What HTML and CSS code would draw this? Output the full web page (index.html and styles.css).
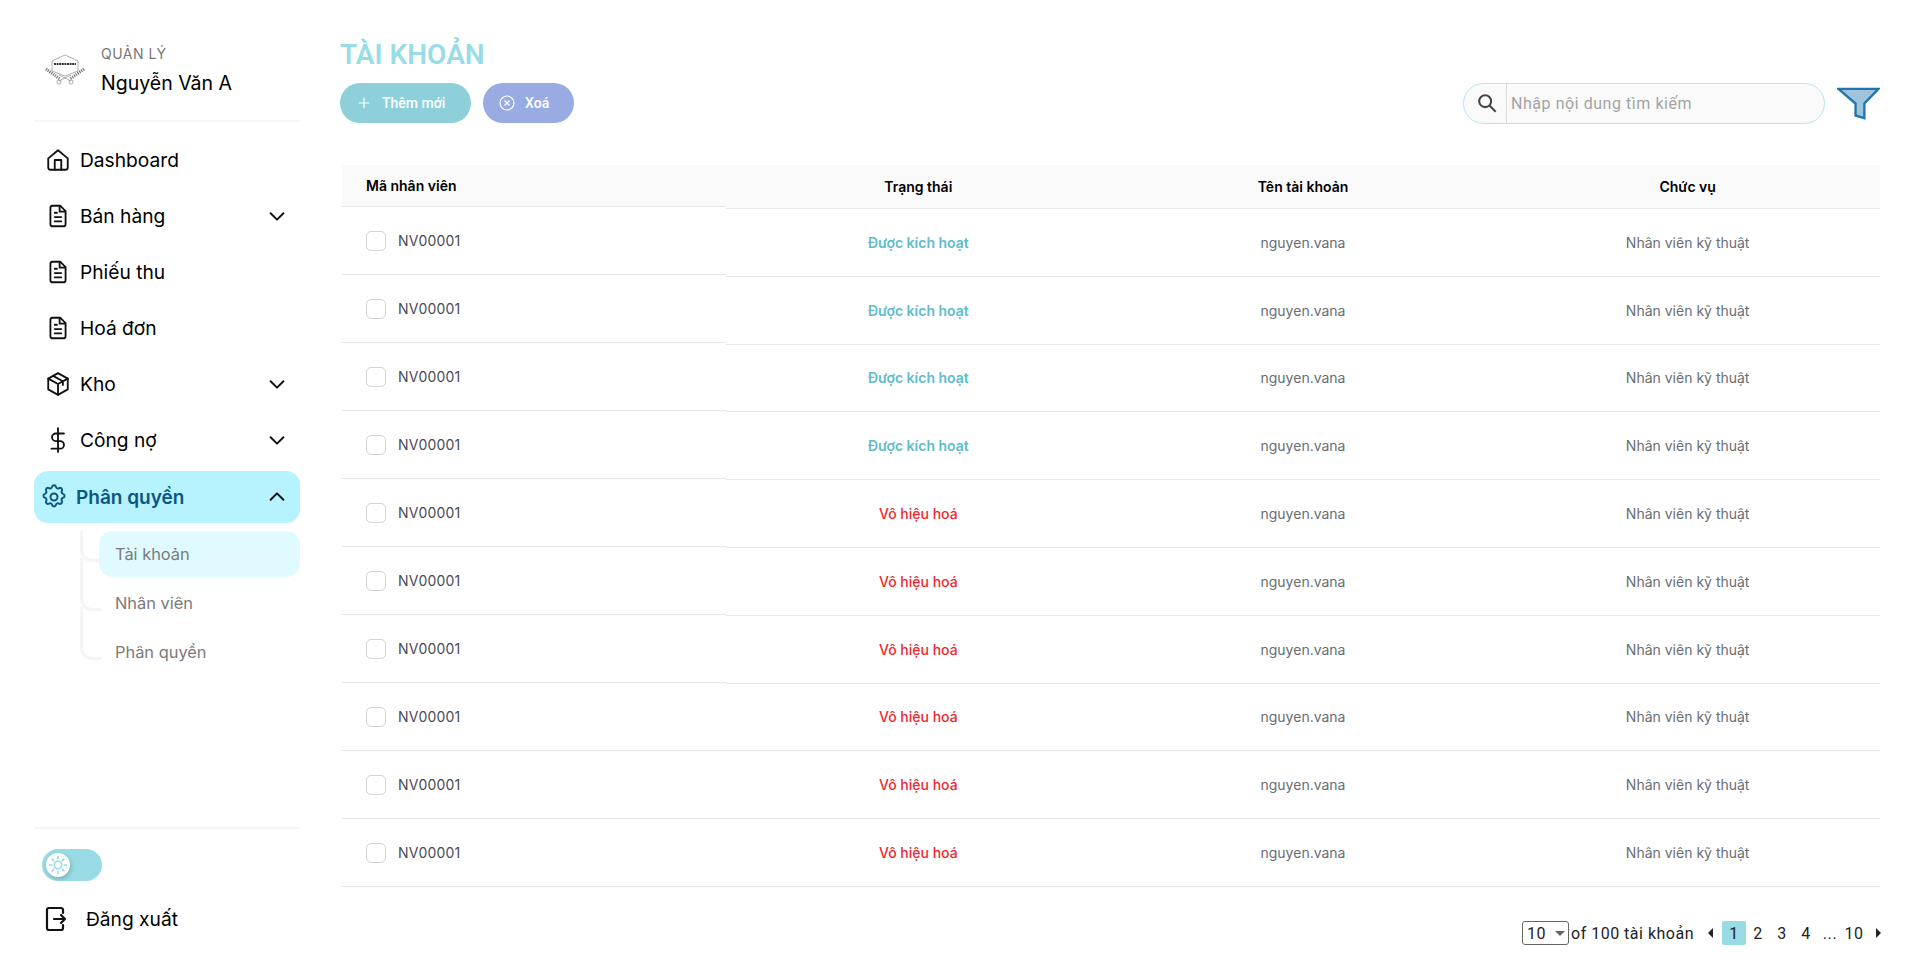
FILE: index.html
```html
<!DOCTYPE html>
<html lang="vi">
<head>
    <meta charset="UTF-8">
    <title>Tài khoản</title>
    <link rel="stylesheet" href="styles.css">
</head>
<body>

<aside class="sidebar">
    <div class="user">
        <svg class="logo" viewBox="0 0 40 32" fill="none" stroke="#777" stroke-width="0.6">
            <path d="M20 1 L33 7 V17 L20 22 L7 17 V7 Z"/>
            <line x1="9" y1="10" x2="31" y2="10" stroke="#333" stroke-width="2" stroke-dasharray="2 .6"/>
            <path d="M1 15 L15 25 M39 15 L25 25" stroke-width="3" stroke-dasharray="1.2 1"/>
            <path d="M14 27 L26 21 M26 27 L14 21"/>
            <circle cx="14" cy="28" r="2"/>
            <circle cx="26" cy="28" r="2"/>
        </svg>
        <div>
            <div class="user-role">QUẢN LÝ</div>
            <div class="user-name">Nguyễn Văn A</div>
        </div>
    </div>

    <nav class="menu">
        <a class="menu-item">
            <svg class="menu-icon" viewBox="0 0 24 24"><path d="M3 10.5 12 3l9 7.5V19a2 2 0 0 1-2 2H5a2 2 0 0 1-2-2z"/><path d="M9 21v-9h6v9"/></svg>
            Dashboard
        </a>
        <a class="menu-item">
            <svg class="menu-icon" viewBox="0 0 24 24"><path d="M14 2.5H7a2 2 0 0 0-2 2v15a2 2 0 0 0 2 2h10a2 2 0 0 0 2-2V7.5z"/><path d="M13.5 3v5h5M9 9h2M9 13h6M9 17h6"/></svg>
            Bán hàng
            <svg class="chevron" viewBox="0 0 24 24"><path d="m5 9 7 7 7-7"/></svg>
        </a>
        <a class="menu-item">
            <svg class="menu-icon" viewBox="0 0 24 24"><path d="M14 2.5H7a2 2 0 0 0-2 2v15a2 2 0 0 0 2 2h10a2 2 0 0 0 2-2V7.5z"/><path d="M13.5 3v5h5M9 9h2M9 13h6M9 17h6"/></svg>
            Phiếu thu
        </a>
        <a class="menu-item">
            <svg class="menu-icon" viewBox="0 0 24 24"><path d="M14 2.5H7a2 2 0 0 0-2 2v15a2 2 0 0 0 2 2h10a2 2 0 0 0 2-2V7.5z"/><path d="M13.5 3v5h5M9 9h2M9 13h6M9 17h6"/></svg>
            Hoá đơn
        </a>
        <a class="menu-item">
            <svg class="menu-icon" viewBox="0 0 24 24"><path d="M12 2 3 7v10l9 5 9-5V7z"/><path d="m3 7 9 5 9-5M12 12v10M7.5 4.5l9 5v3.5"/></svg>
            Kho
            <svg class="chevron" viewBox="0 0 24 24"><path d="m5 9 7 7 7-7"/></svg>
        </a>
        <a class="menu-item">
            <svg class="menu-icon" viewBox="0 0 24 24"><path d="M12 1v22M17.5 6H10a3.5 3.5 0 0 0 0 7h4a3.5 3.5 0 0 1 0 7H6"/></svg>
            Công nợ
            <svg class="chevron" viewBox="0 0 24 24"><path d="m5 9 7 7 7-7"/></svg>
        </a>
        <a class="menu-item menu-item-active">
            <svg class="menu-icon" viewBox="0 0 24 24"><path d="M10.3 3.3c.4-1.8 3-1.8 3.4 0a1.7 1.7 0 0 0 2.6 1.1c1.5-.9 3.3.8 2.4 2.4a1.7 1.7 0 0 0 1 2.5c1.8.4 1.8 3 0 3.4a1.7 1.7 0 0 0-1 2.6c.9 1.5-.9 3.3-2.4 2.4a1.7 1.7 0 0 0-2.6 1c-.4 1.8-3 1.8-3.4 0a1.7 1.7 0 0 0-2.6-1c-1.5.9-3.3-.9-2.4-2.4a1.7 1.7 0 0 0-1-2.6c-1.8-.4-1.8-3 0-3.4a1.7 1.7 0 0 0 1-2.5c-.9-1.6.9-3.3 2.4-2.4a1.7 1.7 0 0 0 2.6-1.1z"/><circle cx="12" cy="12" r="3"/></svg>
            Phân quyền
            <svg class="chevron" viewBox="0 0 24 24"><path d="m5 15 7-7 7 7"/></svg>
        </a>
        <div class="submenu">
            <a class="submenu-item submenu-item-active">Tài khoản</a>
            <a class="submenu-item">Nhân viên</a>
            <a class="submenu-item">Phân quyền</a>
        </div>
    </nav>

    <div class="sidebar-bottom">
        <div class="toggle">
            <span class="toggle-knob">
                <svg viewBox="0 0 24 24" fill="none" stroke="#98dbe4" stroke-width="2" stroke-linecap="round"><circle cx="12" cy="12" r="4.5"/><path d="M12 2v2.5M12 19.5V22M2 12h2.5M19.5 12H22M5 5l1.7 1.7M17.3 17.3 19 19M5 19l1.7-1.7M17.3 6.7 19 5"/></svg>
            </span>
        </div>
        <a class="logout">
            <svg class="logout-icon" viewBox="0 0 22 26"><path d="M18 7V4a2 2 0 0 0-2-2H4a2 2 0 0 0-2 2v18a2 2 0 0 0 2 2h12a2 2 0 0 0 2-2v-3"/><path d="M9 13h11M16 9l4 4-4 4"/></svg>
            Đăng xuất
        </a>
    </div>
</aside>

<main class="main">
    <h1 class="title">TÀI KHOẢN</h1>

    <div class="toolbar">
        <button class="btn btn-add">
            <svg class="btn-icon" viewBox="0 0 14 14"><path d="M7 1v12M1 7h12"/></svg>
            Thêm mới
        </button>
        <button class="btn btn-delete">
            <svg class="btn-icon btn-icon-x" viewBox="0 0 16 16"><circle cx="8" cy="8" r="7"/><path d="m5.5 5.5 5 5M10.5 5.5l-5 5"/></svg>
            Xoá
        </button>

        <div class="search">
            <span class="search-icon">
                <svg viewBox="0 0 24 24" fill="none" stroke="#444" stroke-width="2.2"><circle cx="10" cy="10" r="6.5"/><path d="m15 15 6.5 6.5"/></svg>
            </span>
            <span class="search-text">Nhập nội dung tìm kiếm</span>
        </div>
        <svg class="filter" viewBox="0 0 44 33"><path d="M1.5 1.5h41L28 16.5V31.5l-9-2.5V16.5z" fill="#9fc3da" stroke="#1f75ad" stroke-width="2.4"/></svg>
    </div>

    <div class="table">
        <div class="col-id">
            <div class="col-id-head">Mã nhân viên</div>
            <div class="id-cell"><span class="checkbox"></span>NV00001</div>
            <div class="id-cell"><span class="checkbox"></span>NV00001</div>
            <div class="id-cell"><span class="checkbox"></span>NV00001</div>
            <div class="id-cell"><span class="checkbox"></span>NV00001</div>
            <div class="id-cell"><span class="checkbox"></span>NV00001</div>
            <div class="id-cell"><span class="checkbox"></span>NV00001</div>
            <div class="id-cell"><span class="checkbox"></span>NV00001</div>
            <div class="id-cell"><span class="checkbox"></span>NV00001</div>
            <div class="id-cell"><span class="checkbox"></span>NV00001</div>
            <div class="id-cell"><span class="checkbox"></span>NV00001</div>
        </div>
        <div class="col-rest">
            <div class="row row-head"><span>Trạng thái</span><span>Tên tài khoản</span><span>Chức vụ</span></div>
            <div class="row"><span class="status-on">Được kích hoạt</span><span>nguyen.vana</span><span>Nhân viên kỹ thuật</span></div>
            <div class="row"><span class="status-on">Được kích hoạt</span><span>nguyen.vana</span><span>Nhân viên kỹ thuật</span></div>
            <div class="row"><span class="status-on">Được kích hoạt</span><span>nguyen.vana</span><span>Nhân viên kỹ thuật</span></div>
            <div class="row"><span class="status-on">Được kích hoạt</span><span>nguyen.vana</span><span>Nhân viên kỹ thuật</span></div>
            <div class="row"><span class="status-off">Vô hiệu hoá</span><span>nguyen.vana</span><span>Nhân viên kỹ thuật</span></div>
            <div class="row"><span class="status-off">Vô hiệu hoá</span><span>nguyen.vana</span><span>Nhân viên kỹ thuật</span></div>
            <div class="row"><span class="status-off">Vô hiệu hoá</span><span>nguyen.vana</span><span>Nhân viên kỹ thuật</span></div>
            <div class="row"><span class="status-off">Vô hiệu hoá</span><span>nguyen.vana</span><span>Nhân viên kỹ thuật</span></div>
            <div class="row"><span class="status-off">Vô hiệu hoá</span><span>nguyen.vana</span><span>Nhân viên kỹ thuật</span></div>
            <div class="row"><span class="status-off">Vô hiệu hoá</span><span>nguyen.vana</span><span>Nhân viên kỹ thuật</span></div>
        </div>
    </div>

    <div class="pagination">
        <span class="page-size">10<i class="caret-down"></i></span>
        <span class="page-total">of 100 tài khoản</span>
        <i class="arrow-left"></i>
        <a class="page page-active">1</a>
        <a class="page">2</a>
        <a class="page">3</a>
        <a class="page">4</a>
        <a class="page">...</a>
        <a class="page">10</a>
        <i class="arrow-right"></i>
    </div>
</main>

</body>
</html>
```

FILE: styles.css
```css
* {
    margin: 0;
    padding: 0;
    box-sizing: border-box;
}

body {
    width: 100%;
    height: 100vh;
    display: flex;
    background: #fff;
    font-family: 'Inter', sans-serif;
    color: #000;
    overflow: hidden;
}

/* Sidebar */
.sidebar {
    width: 266px;
    margin-left: 34px;
    flex-shrink: 0;
    display: flex;
    flex-direction: column;
}

.user {
    height: 122px;
    padding: 44px 0 0 11px;
    display: flex;
    gap: 16px;
    border-bottom: 2px solid #f5f5f5;
}

.logo {
    width: 40px;
    height: 32px;
    margin-top: 10px;
}

.user-role {
    font-size: 14px;
    line-height: 20px;
    color: #777;
    letter-spacing: 0.5px;
}

.user-name {
    font-size: 19.5px;
    line-height: 24px;
    margin-top: 7px;
}

.menu {
    margin-top: 10px;
}

.menu-item {
    height: 56px;
    padding: 0 12px 0 11px;
    display: flex;
    align-items: center;
    gap: 9px;
    font-size: 19.2px;
}

.menu-icon {
    width: 26px;
    height: 26px;
    fill: none;
    stroke: #111;
    stroke-width: 1.7;
    stroke-linejoin: round;
    stroke-linecap: round;
}

.chevron {
    width: 22px;
    height: 22px;
    margin-left: auto;
    fill: none;
    stroke: #111;
    stroke-width: 2.1;
    stroke-linecap: round;
    stroke-linejoin: round;
}

.menu-item-active {
    height: 52px;
    margin-top: 3px;
    padding-left: 6px;
    gap: 8px;
    background: #b6f3fe;
    border-radius: 14px;
    font-size: 19px;
    font-weight: 600;
    color: #0c5680;
}

.menu-item-active .menu-icon {
    width: 28px;
    height: 28px;
    stroke: #0c5680;
}

.submenu {
    margin-top: 8px;
    margin-left: 65px;
    display: flex;
    flex-direction: column;
    gap: 3px;
}

.submenu-item {
    height: 46px;
    padding-left: 16px;
    display: flex;
    align-items: center;
    position: relative;
    font-size: 16.4px;
    color: #7a7a7a;
    border-radius: 14px;
}

.submenu-item::before {
    content: '';
    position: absolute;
    left: -19px;
    top: -22px;
    width: 19px;
    height: 50px;
    border-left: 3px solid #f5f5f5;
    border-bottom: 3px solid #f5f5f5;
    border-bottom-left-radius: 12px;
}

.submenu-item-active::before {
    top: 0;
    height: 28px;
}

.submenu-item-active {
    background: #e0fbff;
}

.sidebar-bottom {
    margin-top: auto;
    height: 148px;
    border-top: 2px solid #f5f5f5;
    padding-top: 20px;
}

.toggle {
    width: 60px;
    height: 32px;
    margin-left: 8px;
    padding: 4px;
    background: #98dbe4;
    border-radius: 16px;
}

.toggle-knob {
    width: 24px;
    height: 24px;
    display: flex;
    align-items: center;
    justify-content: center;
    background: #fff;
    border-radius: 50%;
    box-shadow: 1px 2px 4px rgba(0, 0, 0, 0.2);
}

.toggle-knob svg {
    width: 20px;
    height: 20px;
}

.logout {
    margin-top: 25px;
    padding-left: 11px;
    display: flex;
    align-items: center;
    gap: 19px;
    font-size: 19.2px;
}

.logout-icon {
    width: 22px;
    height: 26px;
    fill: none;
    stroke: #111;
    stroke-width: 2.2;
    stroke-linecap: round;
    stroke-linejoin: round;
}

/* Main */
.main {
    flex: 1;
    margin-left: 40px;
    padding-right: 40px;
}

.title {
    margin-top: 38px;
    font-family: 'Roboto', sans-serif;
    font-size: 28px;
    line-height: 34px;
    font-weight: 600;
    color: #98dde6;
}

.toolbar {
    margin-top: 11px;
    display: flex;
    align-items: center;
    gap: 12px;
    height: 40px;
}

.btn {
    height: 40px;
    display: flex;
    align-items: center;
    border: none;
    border-radius: 20px;
    color: #fff;
    font-family: 'Roboto', sans-serif;
    font-size: 14px;
    font-weight: 500;
}

.btn-add {
    width: 131px;
    padding-left: 18px;
    gap: 12px;
    background: #8dd0da;
}

.btn-delete {
    width: 91px;
    padding-left: 16px;
    gap: 10px;
    background: #98ace3;
}

.btn-icon {
    width: 12px;
    height: 12px;
    fill: none;
    stroke: #fff;
    stroke-width: 1.4;
}

.btn-icon-x {
    width: 16px;
    height: 16px;
    stroke-width: 1.2;
}

.search {
    width: 362px;
    height: 41px;
    margin-left: auto;
    display: flex;
    align-items: center;
    background: #fafafa;
    border: 1.5px solid #b5e5ec;
    border-radius: 21px;
}

.search-icon {
    width: 43px;
    height: 100%;
    padding-left: 3px;
    flex-shrink: 0;
    display: flex;
    align-items: center;
    justify-content: center;
    border-right: 1px solid #ddd;
}

.search-icon svg {
    width: 22px;
    height: 22px;
}

.search-text {
    margin-left: 4px;
    font-family: 'Roboto', sans-serif;
    font-size: 16px;
    letter-spacing: 0.55px;
    color: #a3a3a3;
}

.filter {
    width: 43px;
    height: 33px;
    flex-shrink: 0;
}

/* Table */
.table {
    margin-top: 42px;
    margin-left: 2px;
    display: flex;
}

.col-id {
    width: 384px;
    flex-shrink: 0;
}

.col-rest {
    flex: 1;
}

.col-id-head {
    height: 42px;
    padding-left: 24px;
    display: flex;
    align-items: center;
    background: #fafafa;
    border-bottom: 1px solid #e8e8e8;
    font-size: 14px;
    font-weight: 600;
}

.id-cell {
    height: 68px;
    padding-left: 24px;
    display: flex;
    align-items: center;
    gap: 12px;
    border-bottom: 1px solid #e8e8e8;
    font-size: 14px;
    letter-spacing: 0.2px;
    color: #4b4b55;
}

.checkbox {
    width: 20px;
    height: 20px;
    background: #fff;
    border: 1px solid #d4d4d4;
    border-radius: 5px;
}

.row {
    height: 67.8px;
    display: grid;
    grid-template-columns: repeat(3, 1fr);
    align-items: center;
    text-align: center;
    border-bottom: 1px solid #e8e8e8;
    font-size: 14px;
    color: #696d75;
}

.row-head {
    height: 44px;
    background: #fafafa;
    font-weight: 600;
    color: #000;
}

.status-on {
    font-weight: 600;
    color: #5fbccb;
}

.status-off {
    font-weight: 500;
    color: #f0272d;
}

/* Pagination */
.pagination {
    margin-top: 34px;
    display: flex;
    align-items: center;
    justify-content: flex-end;
    font-family: 'Roboto', sans-serif;
    font-size: 16px;
    letter-spacing: 0.6px;
    color: #222;
}

.page-size {
    width: 47px;
    height: 24px;
    padding-left: 4px;
    display: flex;
    align-items: center;
    border: 1px solid #666;
    border-radius: 3px;
}

.caret-down {
    margin-left: 9px;
    border-left: 5px solid transparent;
    border-right: 5px solid transparent;
    border-top: 5px solid #666;
}

.page-total {
    margin-left: 2px;
    margin-right: 14px;
    letter-spacing: 0.5px;
}

.arrow-left {
    margin-right: 9px;
    border-top: 5px solid transparent;
    border-bottom: 5px solid transparent;
    border-right: 5px solid #222;
}

.arrow-right {
    margin-left: 10px;
    margin-right: -1px;
    border-top: 5px solid transparent;
    border-bottom: 5px solid transparent;
    border-left: 5px solid #222;
}

.page {
    width: 24px;
    height: 24px;
    display: flex;
    align-items: center;
    justify-content: center;
    border-radius: 2px;
}

.page-active {
    background: #98dbe4;
}
```
